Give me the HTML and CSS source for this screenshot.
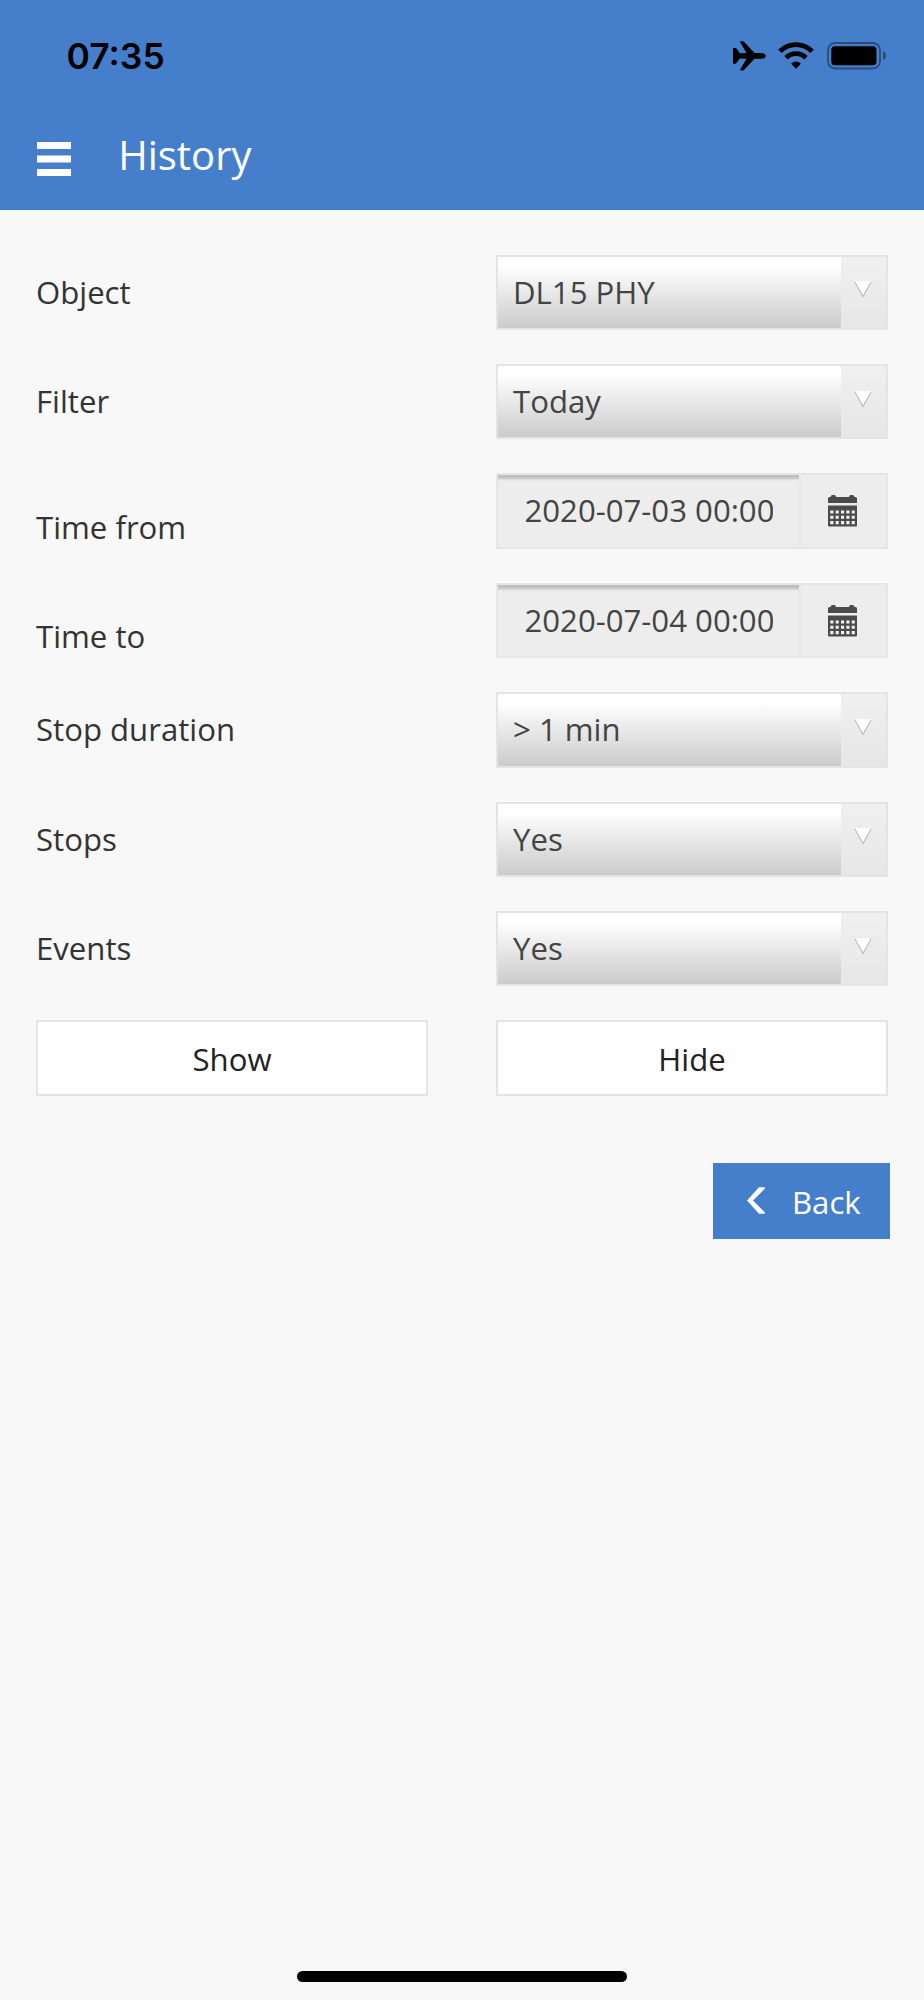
FILE: index.html
```html
<!DOCTYPE html>
<html lang="en">
<head>
<meta charset="utf-8">
<title>History</title>
<link rel="stylesheet" href="styles.css">
</head>
<body>
<svg class="defs" width="0" height="0" aria-hidden="true">
  <symbol id="arrow" viewBox="0 0 18 18">
    <path d="M1 2 9 16.400 17 2" fill="#fff" stroke="#bdbdbd" stroke-width="1.300"/>
    <path d="M1.200 1.300h15.600L9 14.800z" fill="#fff"/>
  </symbol>
  <symbol id="calendar" viewBox="0 0 29 32">
    <path fill="#4b4b4b" d="M0 8V3.500Q0 2 1.500 2H2.500Q2.800 0 4.500 0H6.300Q7.800 0 8 2H21Q21.200 0 22.700 0H24.500Q26.200 0 26.500 2H27.500Q29 2 29 3.500V8z"/>
    <path fill="#4b4b4b" d="M0 10.500H29V30.500Q29 31.500 28 31.500H1Q0 31.500 0 30.500z"/>
    <path stroke="#f4f4f4" stroke-width="3.100" stroke-dasharray="3.100 2.250" d="M2.300 17H27M2.300 22.300H27M2.300 27.600H27"/>
  </symbol>
</svg>
<div class="screen">
  <header class="header">
    <div class="status">
      <span class="clock">07:35</span>
      <div class="indicators">
        <svg class="plane" viewBox="0 0 33 30"><path d="M0 7.200Q0 6.900.5 6.900H2.300Q3 6.900 3.500 7.600L6.800 12.300 13.500 12.100 7.200 1.200Q6.700.3 7.700.3H9.800Q10.700.3 11.500 1.200L21.500 12.100H28.500Q32.700 12.400 32.700 14.900 32.700 17.400 28.500 17.700H21.500L11.500 28.600Q10.700 29.500 9.800 29.500H7.700Q6.700 29.500 7.200 28.600L13.500 17.700 6.800 17.500 3.500 22Q3 22.700 2.300 22.700H.5Q0 22.700 0 22.400z"/></svg>
        <svg class="wifi" viewBox="0 0 36 27"><g fill="none" stroke="#000" stroke-width="4.800"><path d="M1.900 9.300Q8.700 2.600 18 2.600T34.100 9.300"/><path d="M8 15.700Q12.200 11.700 18 11.700T28 15.700"/></g><path d="M13.100 21.700Q15.200 19.600 18 19.600T22.900 21.700L18 26.700z"/></svg>
        <svg class="battery" viewBox="0 0 60 28"><rect x="1" y="1" width="52" height="25.500" rx="7" fill="none" stroke="#2b4c79" stroke-width="1.800"/><rect x="4.300" y="4.300" width="45.200" height="19" rx="3.500"/><path fill="#2b4c79" d="M56 9.200Q59 10.400 59 13.700T56 18.300z"/></svg>
      </div>
    </div>
    <div class="titlebar">
      <svg class="menu" viewBox="0 0 34 35"><path fill="#fff" d="M0 0H34V7H0zM0 13.500H34V20.500H0zM0 27H34V34H0z"/></svg>
      <h1 class="title">History</h1>
    </div>
  </header>
  <main class="form">
    <div class="row"><label class="label">Object</label><div class="select"><span class="value">DL15 PHY</span><span class="drop"><svg class="arrow"><use href="#arrow"/></svg></span></div></div>
    <div class="row"><label class="label">Filter</label><div class="select"><span class="value">Today</span><span class="drop"><svg class="arrow"><use href="#arrow"/></svg></span></div></div>
    <div class="row"><label class="label low">Time from</label><div class="date"><div class="entry"><span class="stamp">2020-07-03 00:00</span></div><span class="pick"><svg class="calendar"><use href="#calendar"/></svg></span></div></div>
    <div class="row"><label class="label low">Time to</label><div class="date"><div class="entry"><span class="stamp">2020-07-04 00:00</span></div><span class="pick"><svg class="calendar"><use href="#calendar"/></svg></span></div></div>
    <div class="row"><label class="label">Stop duration</label><div class="select"><span class="value">&gt; 1 min</span><span class="drop"><svg class="arrow"><use href="#arrow"/></svg></span></div></div>
    <div class="row"><label class="label">Stops</label><div class="select"><span class="value">Yes</span><span class="drop"><svg class="arrow"><use href="#arrow"/></svg></span></div></div>
    <div class="row"><label class="label">Events</label><div class="select"><span class="value">Yes</span><span class="drop"><svg class="arrow"><use href="#arrow"/></svg></span></div></div>
    <div class="row"><div class="button">Show</div><div class="button">Hide</div></div>
  </main>
  <div class="back">
    <svg class="chevron" viewBox="0 0 18 27"><path d="M12 .3H17.800V1.800L6 13.500 17.800 25.200V26.700H12L0 13.500z" fill="#fff"/></svg>
    <span>Back</span>
  </div>
  <div class="home"></div>
</div>
</body>
</html>
```

FILE: styles.css
```css
* { box-sizing: border-box; }
body { margin: 0; background: #f8f8f8; font-family: "Open Sans", sans-serif; font-size: 31.150px; color: #333; }
svg { display: block; flex: none; }
.defs { position: absolute; }
.screen { height: 2000px; display: flex; flex-direction: column; overflow: hidden; }
.header { height: 210px; flex: none; background: #457fcc; }
.status { height: 112px; display: flex; justify-content: space-between; padding: 0 37px 0 66.500px; }
.clock { font: 600 35.500px/113px Inter, sans-serif; color: #000; letter-spacing: 0; }
.indicators { display: flex; align-items: flex-start; padding-top: 41px; }
.plane { width: 33px; height: 30px; }
.wifi { width: 36px; height: 27px; margin: 1px 0 0 12px; }
.battery { width: 60px; height: 28px; margin: 1px 0 0 13px; }
.titlebar { display: flex; padding-left: 36.700px; }
.menu { width: 34px; height: 35px; margin-top: 29.500px; }
.title { margin: 0 0 0 47.500px; font-size: 40px; font-weight: 400; line-height: 85px; color: #fff; }
.form { display: grid; row-gap: 34px; padding: 44.700px 36px 0; }
.row { display: grid; grid-template-columns: 392px 392px; grid-template-rows: 75.400px; column-gap: 68px; }
.label { line-height: 74px; white-space: nowrap; }
.low { padding-top: 16.500px; }
.select { display: flex; border: 2px solid #e4e4e4; color: #444; }
.value { flex: 1; padding-left: 15px; line-height: 70px; background: linear-gradient(#fff 12%, #cbcbcb); }
.drop { width: 45px; background: linear-gradient(#f0f0f0, #e6e6e6); }
.arrow { width: 18px; height: 18px; margin: 23.500px 0 0 12.500px; }
.date { display: flex; border: 2px solid #e6e6e6; background: #ededed; color: #444; }
.entry { width: 301px; padding: 0 26px; background: linear-gradient(#bbb, #c6c6c6 3px, #e3e3e3 5px, #ededed 6px); }
.stamp { display: block; overflow: hidden; white-space: nowrap; line-height: 70px; text-indent: .5px; }
.pick { flex: 1; border-left: 2px solid #e8e8e8; }
.calendar { width: 29px; height: 32px; margin: 20px 0 0 27px; }
.button { border: 2px solid #e4e4e4; background: #fff; color: #222; text-align: center; line-height: 74px; }
.back { align-self: flex-end; width: 177px; height: 76px; margin: 67px 34px 0 0; padding: 0 0 0 33.500px; display: flex; background: #457fcc; color: #fff; line-height: 78px; }
.chevron { width: 18px; height: 27px; margin: 24px 27.500px 0 0; }
.home { width: 330px; height: 11px; margin: auto auto 18px; border-radius: 6px; background: #000; }
```
